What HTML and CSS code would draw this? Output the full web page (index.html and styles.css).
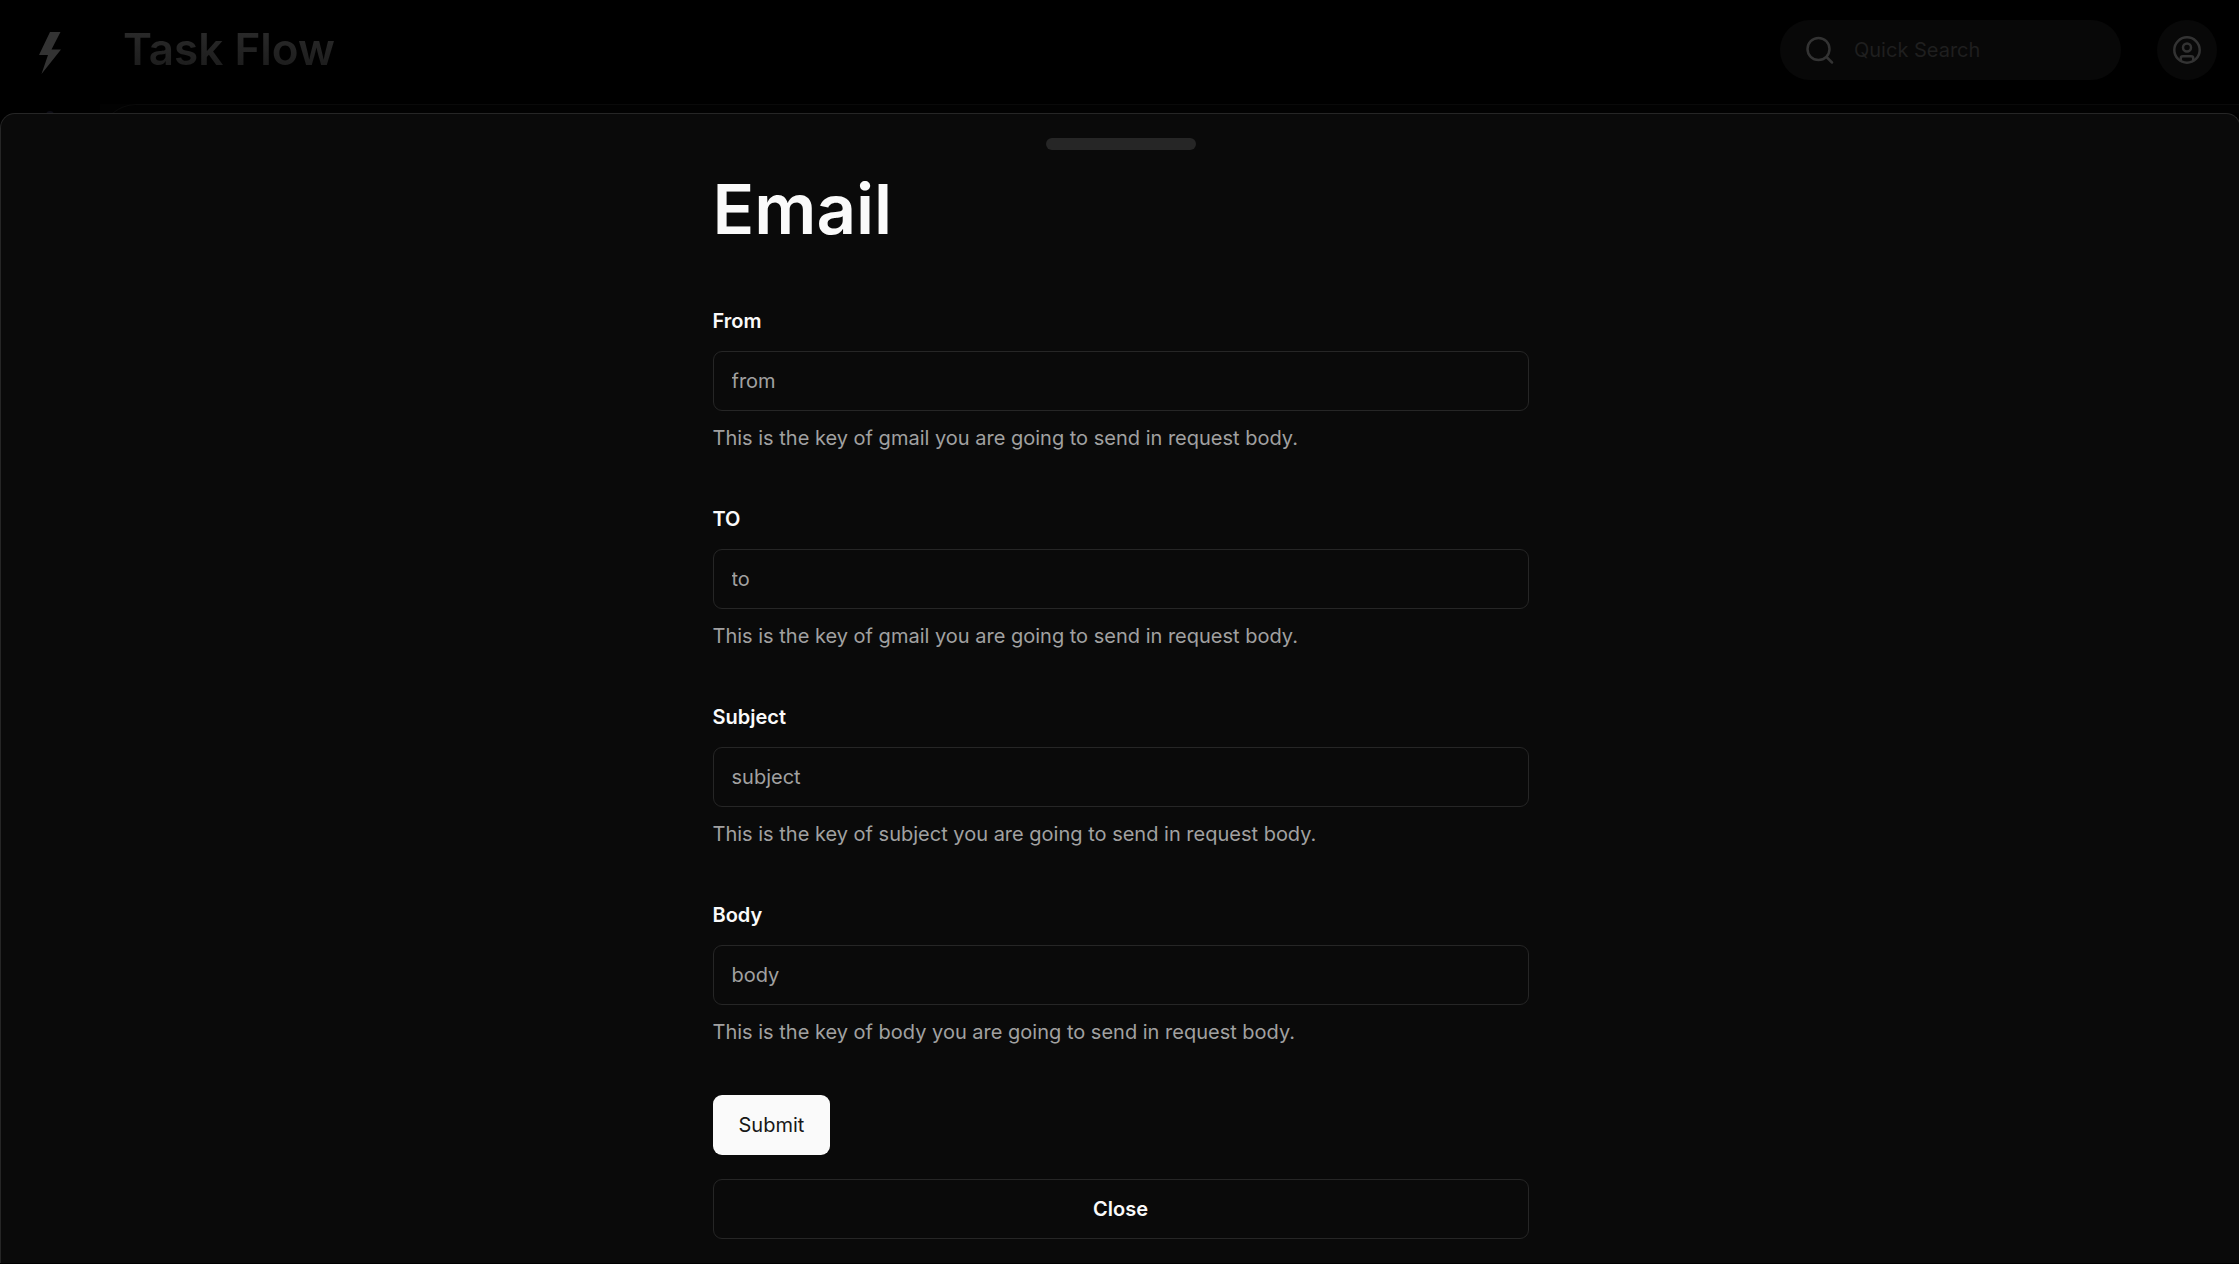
FILE: index.html
```html
<!DOCTYPE html>
<html lang="en">
<head>
<meta charset="utf-8">
<title>Task Flow</title>
<link rel="stylesheet" href="styles.css">
</head>
<body>
<div class="app">
  <header class="topbar">
    <div class="brand">
      <svg class="bolt" viewBox="0 0 22 42" aria-hidden="true"><path d="M11 0H21.500L12.500 17.500H22L2.500 42L9 23H0Z"/></svg>
      <span class="brand-name">Task Flow</span>
    </div>
    <div class="tools">
      <label class="search">
        <svg class="icon" viewBox="0 0 28 28" aria-hidden="true"><circle cx="12.500" cy="13" r="11"/><path d="M20.500 21l5.500 5.500"/></svg>
        <input class="search-input" type="search" placeholder="Quick Search" aria-label="Quick Search">
      </label>
      <button class="avatar" type="button" aria-label="Account">
        <svg class="icon" viewBox="0 0 28 28" aria-hidden="true"><circle cx="14" cy="14" r="12.700"/><circle cx="14" cy="11.500" r="4"/><path d="M7.800 24.500v-2.200a2 2 0 0 1 2-2h8.400a2 2 0 0 1 2 2v2.200"/></svg>
      </button>
    </div>
  </header>
  <div class="workspace">
    <span class="rail-mark"></span>
    <div class="canvas-area"><div class="canvas"></div></div>
  </div>
</div>
<section class="drawer" role="dialog" aria-labelledby="drawer-title">
  <div class="handle"></div>
  <div class="content">
    <h1 class="title" id="drawer-title">Email</h1>
    <form class="form">
      <div class="field">
        <label class="label" for="from">From</label>
        <input class="input" id="from" type="text" placeholder="from">
        <p class="help">This is the key of gmail you are going to send in request body.</p>
      </div>
      <div class="field">
        <label class="label" for="to">TO</label>
        <input class="input" id="to" type="text" placeholder="to">
        <p class="help">This is the key of gmail you are going to send in request body.</p>
      </div>
      <div class="field">
        <label class="label" for="subject">Subject</label>
        <input class="input" id="subject" type="text" placeholder="subject">
        <p class="help">This is the key of subject you are going to send in request body.</p>
      </div>
      <div class="field">
        <label class="label" for="body">Body</label>
        <input class="input" id="body" type="text" placeholder="body">
        <p class="help">This is the key of body you are going to send in request body.</p>
      </div>
      <button class="button submit" type="submit">Submit</button>
    </form>
    <button class="button close" type="button">Close</button>
  </div>
</section>
</body>
</html>
```
FILE: styles.css
```css
* { box-sizing: border-box; }

body {
  margin: 0;
  min-height: 100vh;
  display: flex;
  flex-direction: column;
  padding-bottom: 1px;
  overflow-x: hidden;
  background: #000;
  color: #fafafa;
  font-family: Inter, "Open Sans", sans-serif;
  font-size: 20px;
  line-height: 30px;
}

button, input { font: inherit; color: inherit; }
h1, p { margin: 0; }

.topbar {
  display: flex;
  justify-content: space-between;
  align-items: center;
  height: 104px;
  padding: 0 22px 4px 39px;
}

.brand { display: flex; align-items: center; gap: 62px; }
.bolt { width: 22px; height: 42px; margin-top: 6px; fill: #333; }
.brand-name {
  padding-bottom: 2px;
  font-size: 44px;
  line-height: 60px;
  font-weight: 600;
  background: linear-gradient(#2e2e2e, #181818);
  background-clip: text;
  color: transparent;
}

.tools { display: flex; align-items: center; gap: 36px; }
.search {
  display: flex;
  align-items: center;
  gap: 20px;
  width: 341px;
  height: 60px;
  padding: 0 24px 0 26px;
  border-radius: 30px;
  background: #080808;
}
.icon { flex: none; width: 28px; height: 28px; fill: none; stroke: #333; stroke-width: 2.5; stroke-linecap: round; }
.search-input { flex: 1; min-width: 0; padding: 0; border: 0; outline: 0; background: none; }
.search-input::placeholder { color: #1f1f1f; opacity: 1; }
.avatar {
  display: flex;
  align-items: center;
  justify-content: center;
  width: 60px;
  height: 60px;
  padding: 0;
  border: 0;
  border-radius: 50%;
  background: #080808;
}

.workspace { display: flex; height: 9px; overflow: hidden; }
.rail-mark { flex: none; width: 8px; height: 8px; margin: 7px 46px; border-radius: 50%; background: #0e0e16; }
.canvas-area { flex: 1; height: 60px; background: #020202; }
.canvas { height: 60px; border: 1px solid #0a0a0a; border-right: 0; border-radius: 36px 0 0 0; }

/* The sheet runs slightly past the right edge of the window. */
.drawer {
  flex: 1;
  margin-right: -2px;
  padding: 24px 0;
  border: 1px solid #262626;
  border-bottom: 0;
  border-radius: 15px 15px 0 0;
  background: #0a0a0a;
}
.handle { width: 150px; height: 12px; margin: 0 auto; border-radius: 6px; background: #262626; }
.content { max-width: 816px; margin: 0 auto; padding-top: 23px; }
.title { font-size: 69px; line-height: 72px; font-weight: 600; }
.form { display: flex; flex-direction: column; align-items: flex-start; gap: 48px; padding: 58px 0 24px; }
.field { display: flex; flex-direction: column; gap: 12px; width: 100%; }
.label { line-height: 36px; font-weight: 600; }
.input {
  width: 100%;
  height: 60px;
  padding: 0 18px;
  border: 1px solid #262626;
  border-radius: 9px;
  background: #0a0a0a;
  outline: 0;
}
.input::placeholder { color: #a1a1a1; opacity: 1; }
.help { color: #a1a1a1; }
.button { height: 60px; border-radius: 9px; }
.submit { padding: 0 26px; border: 0; background: #fafafa; color: #171717; }
.close { width: 100%; border: 1px solid #262626; background: #0a0a0a; font-weight: 600; }
```
